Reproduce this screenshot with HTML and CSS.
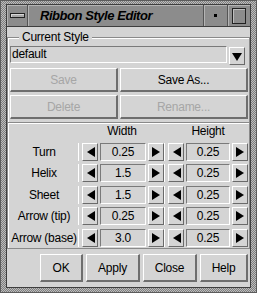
FILE: index.html
```html
<!DOCTYPE html>
<html>
<head>
<meta charset="utf-8">
<link rel="stylesheet" href="styles.css">
</head>
<body>
<div class="window">
  <div class="inner">
    <div class="titlebar">
      <div class="tb-menu"><span class="bar"></span></div>
      <div class="tb-title">Ribbon Style Editor</div>
      <div class="tb-min"><span class="dot"></span></div>
      <div class="tb-max"><span class="sq"></span></div>
    </div>
    <div class="client">
      <div class="group">
        <span class="legend">Current Style</span>
        <div class="combo">
          <div class="field">default</div>
          <div class="dropbtn"><svg width="10" height="9" viewBox="0 0 10 9"><polygon points="0,1 10,1 5,9" fill="#000"/></svg></div>
        </div>
        <div class="btngrid">
          <div class="btn disabled">Save</div>
          <div class="btn">Save As...</div>
          <div class="btn disabled">Delete</div>
          <div class="btn disabled">Rename...</div>
        </div>
      </div>
      <div class="params">
        <div class="hdr"></div>
        <div class="hdr hw">Width</div>
        <div class="hdr hh">Height</div>

        <div class="lbl">Turn</div>
        <div class="spin"><div class="ab"><svg width="9" height="10"><polygon points="9,0 9,10 1,5"/></svg></div><div class="val">0.25</div><div class="ab"><svg width="9" height="10"><polygon points="0,0 0,10 8,5"/></svg></div></div>
        <div class="spin"><div class="ab"><svg width="9" height="10"><polygon points="9,0 9,10 1,5"/></svg></div><div class="val">0.25</div><div class="ab"><svg width="9" height="10"><polygon points="0,0 0,10 8,5"/></svg></div></div>

        <div class="lbl">Helix</div>
        <div class="spin"><div class="ab"><svg width="9" height="10"><polygon points="9,0 9,10 1,5"/></svg></div><div class="val">1.5</div><div class="ab"><svg width="9" height="10"><polygon points="0,0 0,10 8,5"/></svg></div></div>
        <div class="spin"><div class="ab"><svg width="9" height="10"><polygon points="9,0 9,10 1,5"/></svg></div><div class="val">0.25</div><div class="ab"><svg width="9" height="10"><polygon points="0,0 0,10 8,5"/></svg></div></div>

        <div class="lbl">Sheet</div>
        <div class="spin"><div class="ab"><svg width="9" height="10"><polygon points="9,0 9,10 1,5"/></svg></div><div class="val">1.5</div><div class="ab"><svg width="9" height="10"><polygon points="0,0 0,10 8,5"/></svg></div></div>
        <div class="spin"><div class="ab"><svg width="9" height="10"><polygon points="9,0 9,10 1,5"/></svg></div><div class="val">0.25</div><div class="ab"><svg width="9" height="10"><polygon points="0,0 0,10 8,5"/></svg></div></div>

        <div class="lbl">Arrow (tip)</div>
        <div class="spin"><div class="ab"><svg width="9" height="10"><polygon points="9,0 9,10 1,5"/></svg></div><div class="val">0.25</div><div class="ab"><svg width="9" height="10"><polygon points="0,0 0,10 8,5"/></svg></div></div>
        <div class="spin"><div class="ab"><svg width="9" height="10"><polygon points="9,0 9,10 1,5"/></svg></div><div class="val">0.25</div><div class="ab"><svg width="9" height="10"><polygon points="0,0 0,10 8,5"/></svg></div></div>

        <div class="lbl">Arrow (base)</div>
        <div class="spin"><div class="ab"><svg width="9" height="10"><polygon points="9,0 9,10 1,5"/></svg></div><div class="val">3.0</div><div class="ab"><svg width="9" height="10"><polygon points="0,0 0,10 8,5"/></svg></div></div>
        <div class="spin"><div class="ab"><svg width="9" height="10"><polygon points="9,0 9,10 1,5"/></svg></div><div class="val">0.25</div><div class="ab"><svg width="9" height="10"><polygon points="0,0 0,10 8,5"/></svg></div></div>
      </div>
      <div class="actions">
        <div class="btn act ok">OK</div>
        <div class="btn act apply">Apply</div>
        <div class="btn act close">Close</div>
        <div class="btn act help">Help</div>
      </div>
    </div>
  </div>
</div>
</body>
</html>
```

FILE: styles.css
```css
* { box-sizing: border-box; }
body {
  margin: 0;
  font-family: "Liberation Sans", Arial, sans-serif;
  font-size: 12px;
  letter-spacing: -0.25px;
  color: #000;
  background: #fff;
}
.window {
  width: 257px;
  height: 293px;
  border: 1px solid #5c5c5c;
  padding: 3px 5px 4px 5px;
  background: repeating-conic-gradient(#7e7e7e 0 25%, #bdbdbd 0 50%) 0 0 / 2px 2px;
}
.inner {
  height: 100%;
  border: 1px solid #3e3e3e;
  display: flex;
  flex-direction: column;
  background: #d4d4d4;
}
.titlebar {
  height: 22px;
  flex: none;
  display: flex;
  background: #8c8c8c;
  border-bottom: 1px solid #3e3e3e;
}
.tb-menu {
  width: 21px;
  border-right: 1px solid #555;
  box-shadow: inset 1px 1px 0 #b4b4b4;
  display: flex;
  align-items: center;
  justify-content: center;
}
.tb-menu .bar {
  width: 15px;
  height: 5px;
  border: 1px solid #222;
  background: #a8a8a8;
  box-shadow: inset 1px 1px 0 #d8d8d8;
}
.tb-title {
  flex: 1;
  padding-left: 12px;
  font-weight: bold;
  font-style: italic;
  font-size: 13px;
  line-height: 21px;
  letter-spacing: -0.45px;
  box-shadow: inset 1px 1px 0 #b4b4b4;
  border-right: 1px solid #555;
}
.tb-min {
  width: 24px;
  border-right: 1px solid #555;
  box-shadow: inset 1px 1px 0 #b4b4b4;
  display: flex;
  align-items: center;
  justify-content: center;
}
.tb-min .dot {
  width: 3px;
  height: 3px;
  background: #000;
}
.tb-max {
  flex: 1 0 22px;
  max-width: 22px;
  box-shadow: inset 1px 1px 0 #b4b4b4;
  display: flex;
  align-items: center;
  justify-content: center;
}
.tb-max .sq {
  width: 14px;
  height: 16px;
  border: 1px solid #222;
  background: #8c8c8c;
  box-shadow: inset 1px 1px 0 #bdbdbd;
}
.client {
  flex: 1;
  display: flex;
  flex-direction: column;
}
.group {
  position: relative;
  margin-top: 10px;
  border: 1px solid #8a8a8a;
  border-bottom: none;
  box-shadow: inset 1px 1px 0 #fff;
  padding: 8px 1px 3px 2px;
}
.legend {
  position: absolute;
  left: 11px;
  top: -8px;
  padding: 0 3px;
  background: #d4d4d4;
  line-height: 14px;
}
.combo {
  display: flex;
  height: 17px;
  gap: 2px;
  padding-right: 3px;
}
.field {
  flex: 1;
  border-top: 1px solid #7a7a7a;
  border-left: 1px solid #7a7a7a;
  border-bottom: 1px solid #fff;
  border-right: 1px solid #fff;
  padding-left: 1px;
  line-height: 15px;
}
.dropbtn {
  width: 16px;
  height: 18px;
  margin-top: 1px;
  border-top: 1px solid #fff;
  border-left: 1px solid #fff;
  border-bottom: 1px solid #6a6a6a;
  border-right: 1px solid #6a6a6a;
  display: flex;
  align-items: center;
  justify-content: center;
}
.btngrid {
  margin-top: 5px;
  display: grid;
  grid-template-columns: 108px 1fr;
  grid-auto-rows: 24px;
  gap: 3px 2px;
}
.btn {
  border-top: 1px solid #fff;
  border-left: 1px solid #fff;
  border-bottom: 2px solid #6e6e6e;
  border-right: 2px solid #6e6e6e;
  display: flex;
  align-items: center;
  justify-content: center;
  background: #d4d4d4;
}
.btn.disabled { color: #a6a6a6; }
.params {
  border: 1px solid #8a8a8a;
  box-shadow: inset 1px 1px 0 #fff;
  height: 127px;
  display: grid;
  grid-template-columns: 70px 86px 84px;
  grid-template-rows: 15px repeat(5, 18px);
  row-gap: 3.5px;
  padding-top: 1px;
}
.hdr {
  text-align: center;
  line-height: 14px;
}
.hw { padding-left: 2px; }
.hh { padding-left: 4px; }
.lbl {
  text-align: center;
  line-height: 18px;
  white-space: nowrap;
  padding-left: 2px;
}
.spin {
  display: flex;
  align-items: stretch;
  gap: 2px;
  padding-left: 3px;
  border-left: 1px solid #fff;
}
.ab {
  width: 16px;
  border-top: 1px solid #fff;
  border-left: 1px solid #fff;
  border-bottom: 1px solid #6a6a6a;
  border-right: 1px solid #6a6a6a;
  display: flex;
  align-items: center;
  justify-content: center;
}
.ab svg polygon { fill: #000; }
.val {
  flex: 1;
  border-top: 1px solid #7a7a7a;
  border-left: 1px solid #7a7a7a;
  border-bottom: 1px solid #fff;
  border-right: 1px solid #fff;
  text-align: center;
  line-height: 16px;
}
.actions {
  flex: 1;
  display: flex;
  justify-content: flex-end;
  align-items: flex-start;
  gap: 3px;
  padding: 5px 2px 0 0;
}
.act { height: 28px; }
.ok { width: 43px; }
.apply { width: 54px; }
.close { width: 54px; }
.help { width: 48px; }
```
